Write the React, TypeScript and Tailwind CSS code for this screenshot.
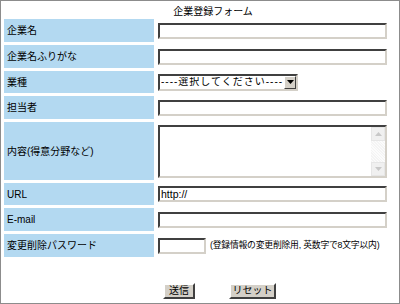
const inset =
  "border-2 border-t-[#404040] border-l-[#404040] border-b-[#d4d0c8] border-r-[#d4d0c8] bg-white";

function Label({ children, h = "h-[23px]" }: { children: React.ReactNode; h?: string }) {
  return (
    <div className={`${h} flex items-center bg-[#b3d9f1] pl-[3px] text-black`}>{children}</div>
  );
}

function Cell({ children, h = "h-[23px]" }: { children: React.ReactNode; h?: string }) {
  return <div className={`${h} flex items-center pl-px`}>{children}</div>;
}

function TextBox({ w = "w-[229px]", value }: { w?: string; value?: string }) {
  return (
    <input
      type="text"
      defaultValue={value}
      className={`${inset} ${w} h-[16px] px-px text-[10.5px] leading-none outline-none`}
    />
  );
}

function Arrow({ up }: { up?: boolean }) {
  return (
    <div className="flex h-[14px] w-[14px] items-center justify-center border border-[#e6e6e6] bg-[#f0f0f0]">
      <svg width="7" height="4" viewBox="0 0 7 4">
        <path d={up ? "M0 4 L3.5 0 L7 4 Z" : "M0 0 L3.5 4 L7 0 Z"} fill="#c8c8c8" />
      </svg>
    </div>
  );
}

export default function App() {
  return (
    <div
      className="h-[304px] w-[400px] border border-[#8c8c8c] bg-white text-[10px] text-black"
      style={{ fontFamily: '"Liberation Sans", "Noto Sans CJK JP", sans-serif' }}
    >
      <div className="flex h-[18px] items-center justify-center pl-[26px] pt-[4px] leading-none">
        企業登録フォーム
      </div>

      <div className="ml-[3px] grid grid-cols-[150px_232px] gap-x-[3px] gap-y-[3px]">
        <Label>企業名</Label>
        <Cell>
          <TextBox />
        </Cell>

        <Label>企業名ふりがな</Label>
        <Cell>
          <TextBox />
        </Cell>

        <Label h="h-[22px]">業種</Label>
        <Cell h="h-[22px]">
          <div className={`${inset} flex h-[17px] w-[140px] items-center`}>
            <select className="h-full flex-1 appearance-none bg-white pl-px text-[10px] leading-none tracking-[1px] outline-none">
              <option>----選択してください----</option>
            </select>
            <div className="flex h-[13px] w-[14px] items-center justify-center border border-t-white border-l-white border-b-[#404040] border-r-[#404040] bg-[#d4d0c8]">
              <svg width="7" height="4" viewBox="0 0 7 4">
                <path d="M0 0 L3.5 4 L7 0 Z" fill="#000" />
              </svg>
            </div>
          </div>
        </Cell>

        <Label>担当者</Label>
        <Cell>
          <TextBox />
        </Cell>

        <Label h="h-[58px]">内容(得意分野など)</Label>
        <Cell h="h-[58px]">
          <div className={`${inset} flex h-[53px] w-[229px]`}>
            <textarea className="h-full flex-1 resize-none overflow-hidden bg-white text-[10px] outline-none" />
            <div className="flex w-[14px] flex-col bg-[repeating-linear-gradient(45deg,#f4f4f4_0px,#f4f4f4_1px,#fcfcfc_1px,#fcfcfc_2px)]">
              <Arrow up />
              <div className="flex-1" />
              <Arrow />
            </div>
          </div>
        </Cell>

        <Label h="h-[22px]">URL</Label>
        <Cell h="h-[22px]">
          <TextBox value="http://" />
        </Cell>

        <Label>E-mail</Label>
        <Cell>
          <TextBox />
        </Cell>

        <Label>変更削除パスワード</Label>
        <Cell>
          <div className="flex items-center gap-[4px]">
            <TextBox w="w-[48px]" />
            <span className="text-[8.8px] leading-none tracking-[-0.2px]">
              (登録情報の変更削除用, 英数字で8文字以内)
            </span>
          </div>
        </Cell>
      </div>

      <div className="mt-[26px] flex gap-[34px] pl-[162px]">
        <button className="h-[16px] w-[32px] border-2 border-t-white border-l-white border-b-[#404040] border-r-[#404040] bg-[#d4d0c8] text-[10px] leading-none">
          送信
        </button>
        <button className="h-[16px] w-[47px] border-2 border-t-white border-l-white border-b-[#404040] border-r-[#404040] bg-[#d4d0c8] text-[10px] leading-none">
          リセット
        </button>
      </div>
    </div>
  );
}
